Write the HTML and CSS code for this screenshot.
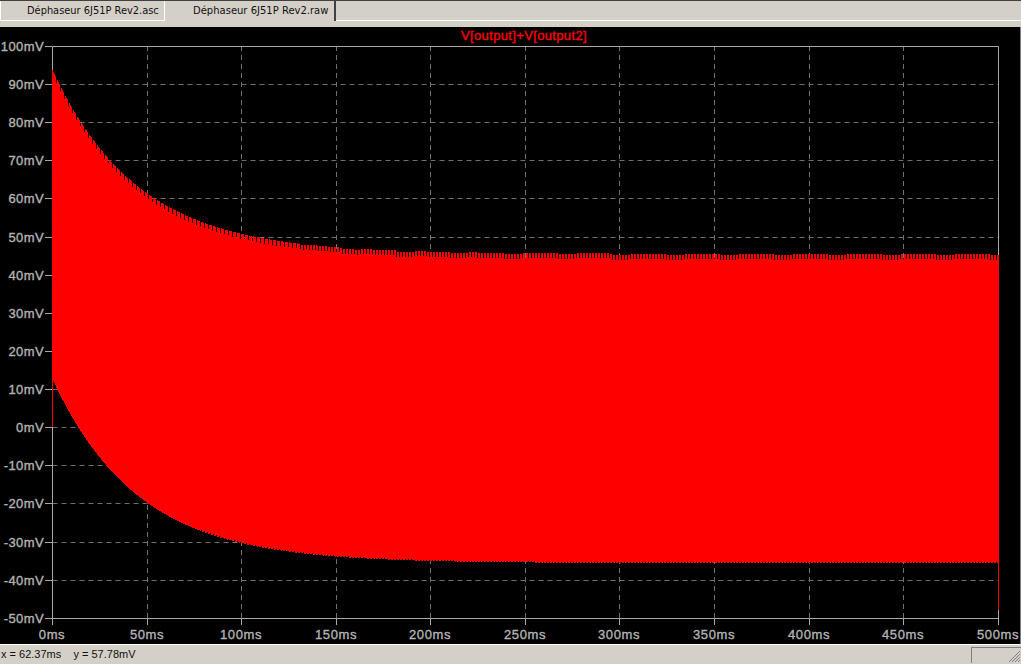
FILE: index.html
```html
<!DOCTYPE html>
<html lang="fr">
<head>
<meta charset="utf-8">
<title>LTspice</title>
<link rel="stylesheet" href="styles.css">
</head>
<body>
<div class="app">
  <div class="tabbar">
    <div class="tabs">
      <div class="tab tab-back">Déphaseur 6J51P Rev2.asc</div>
      <div class="tab tab-active">Déphaseur 6J51P Rev2.raw</div>
    </div>
  </div>
  <div class="plot">
    <svg class="chart" width="1020" height="617" viewBox="0 27 1020 617">
      <path class="grid" d="M52.5 84.5H998M52.5 122.5H998M52.5 160.5H998M52.5 198.5H998M52.5 237.5H998M52.5 275.5H998M52.5 313.5H998M52.5 351.5H998M52.5 389.5H998M52.5 427.5H998M52.5 465.5H998M52.5 503.5H998M52.5 542.5H998M52.5 580.5H998"/>
      <path class="grid" d="M147.5 46V618M241.5 46V618M336.5 46V618M430.5 46V618M525.5 46V618M619.5 46V618M714.5 46V618M809.5 46V618M903.5 46V618"/>
      <path class="frame" d="M52.5 46.5H998.5V618.5H52.5ZM45 46.5H52M45 84.5H52M45 122.5H52M45 160.5H52M45 198.5H52M45 237.5H52M45 275.5H52M45 313.5H52M45 351.5H52M45 389.5H52M45 427.5H52M45 465.5H52M45 503.5H52M45 542.5H52M45 580.5H52M45 618.5H52M52.5 618V625M147.5 618V625M241.5 618V625M336.5 618V625M430.5 618V625M525.5 618V625M619.5 618V625M714.5 618V625M809.5 618V625M903.5 618V625M998.5 618V625"/>
      <path id="trace" class="trace" d=""/>
      <text class="title" x="524" y="40">V[output]+V[output2]</text>
      <g class="ylabels">
        <text x="44" y="51">100mV</text><text x="44" y="89">90mV</text><text x="44" y="127">80mV</text><text x="44" y="165">70mV</text>
        <text x="44" y="203">60mV</text><text x="44" y="242">50mV</text><text x="44" y="280">40mV</text><text x="44" y="318">30mV</text>
        <text x="44" y="356">20mV</text><text x="44" y="394">10mV</text><text x="44" y="432">0mV</text><text x="44" y="470">-10mV</text>
        <text x="44" y="508">-20mV</text><text x="44" y="547">-30mV</text><text x="44" y="585">-40mV</text><text x="44" y="623">-50mV</text>
      </g>
      <g class="xlabels">
        <text x="52" y="639">0ms</text><text x="147" y="639">50ms</text><text x="241" y="639">100ms</text><text x="336" y="639">150ms</text>
        <text x="430" y="639">200ms</text><text x="525" y="639">250ms</text><text x="619" y="639">300ms</text><text x="714" y="639">350ms</text>
        <text x="809" y="639">400ms</text><text x="903" y="639">450ms</text><text x="998" y="639">500ms</text>
      </g>
    </svg>
  </div>
  <div class="statusbar">
    <span class="readout">x = 62.37ms&nbsp;&nbsp;&nbsp;&nbsp;y = 57.78mV</span>
    <div class="grip-panel">
      <svg class="grip" width="14" height="14" viewBox="0 0 14 14"><path d="M13 2L2 13M13 5L5 13M13 8L8 13M13 11L11 13"/></svg>
    </div>
  </div>
</div>
<script src="chart.js"></script>
</body>
</html>
```

FILE: styles.css
```css
html, body {
  margin: 0;
  padding: 0;
  background: #d4d0c8;
}
.app {
  width: 1021px;
  height: 664px;
  display: flex;
  flex-direction: column;
  overflow: hidden;
  font-family: "DejaVu Sans", sans-serif;
}
.tabbar {
  height: 26px;
  flex: none;
  border-top: 1px solid #404040;
  background: #d4d0c8;
}
.tabs {
  display: flex;
  height: 19px;
  border-bottom: 1px solid #fff;
}
.tab {
  box-sizing: border-box;
  height: 20px;
  font-size: 10px;
  line-height: 19px;
  color: #111;
  white-space: nowrap;
}
.tab-back {
  width: 165px;
  padding-left: 26px;
  font-size: 9.85px;
  border-right: 1px solid #fff;
  border-left: 1px solid #fff;
}
.tab-active {
  width: 171px;
  padding-left: 28px;
  background: #d4d0c8;
  border-right: 2px solid #404040;
}
.plot {
  flex: none;
  height: 617px;
  background: #000;
  border-right: 1px solid #808080;
}
.chart {
  display: block;
}
.grid {
  fill: none;
  stroke: #707070;
  stroke-width: 1;
  stroke-dasharray: 5 4;
}
.frame {
  fill: none;
  stroke: #a8a8a8;
  stroke-width: 1;
}
.trace {
  fill: none;
  stroke: #f00;
  stroke-width: 1;
  shape-rendering: crispEdges;
}
.title {
  font-family: "Liberation Sans", sans-serif;
  font-size: 13px;
  letter-spacing: 0.35px;
  fill: #f00;
  stroke: #f00;
  stroke-width: 0.35px;
  text-anchor: middle;
}
.ylabels text, .xlabels text {
  font-family: "Liberation Sans", sans-serif;
  font-size: 13px;
  fill: #b4b4b4;
  stroke: #b4b4b4;
  stroke-width: 0.35px;
}
.ylabels text {
  text-anchor: end;
  letter-spacing: 0.4px;
}
.xlabels text {
  text-anchor: middle;
  letter-spacing: 0.6px;
}
.statusbar {
  flex: none;
  height: 20px;
  box-sizing: border-box;
  border-top: 1px solid #fff;
  display: flex;
  align-items: flex-start;
  justify-content: space-between;
}
.readout {
  font-family: "Liberation Sans", sans-serif;
  font-size: 11px;
  line-height: 19px;
  padding-left: 1px;
  color: #111;
}
.grip-panel {
  box-sizing: border-box;
  width: 50px;
  height: 16px;
  margin-top: 2px;
  border-top: 1px solid #808080;
  border-left: 1px solid #808080;
  position: relative;
}
.grip {
  position: absolute;
  right: 0;
  bottom: 0;
}
.grip path {
  fill: none;
  stroke: #808080;
  stroke-width: 1;
}
```

FILE: chart.js
```js
// Draws the transient waveform envelope as one column per pixel.
(function () {
  var zero = 427.5, perMv = 3.81, perMs = 1.892, left = 52;
  var d = "";
  for (var x = left; x <= 998; x++) {
    var t = (x - left) / perMs;
    var decay = 48.3 * Math.exp(-t / 45);
    var high = Math.round(zero - (45.6 + decay) * perMv);
    var low = Math.round(zero - (-35.6 + decay) * perMv);
    var period = x < 300 ? 4 : 3;
    if (x > left && x % period === 0) high += 5;
    if (x > 300 && Math.floor(x / 18) % 3 === 1) high += 1;
    if (x > 200 && x % 3 === 0) low -= 1;
    if (x === left) { high = 70; low = 427; }
    if (x === 998) { low = 610; }
    d += "M" + (x + 0.5) + " " + high + "V" + low;
  }
  document.getElementById("trace").setAttribute("d", d);
})();
```
